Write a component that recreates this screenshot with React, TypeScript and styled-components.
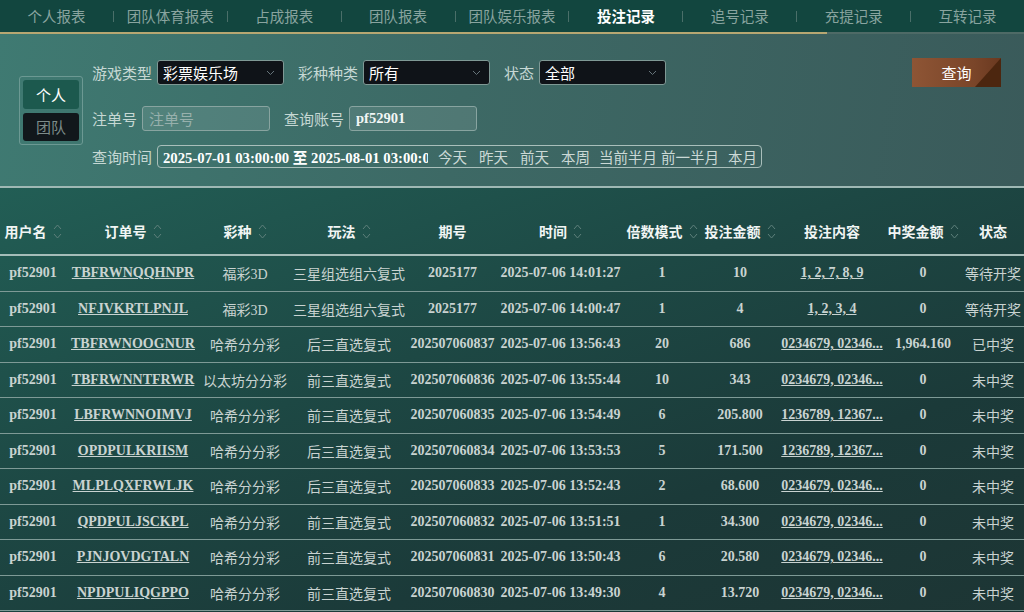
import React from 'react';
import styled, { createGlobalStyle } from 'styled-components';

const GlobalStyle = createGlobalStyle`
  html, body {
    margin: 0;
    padding: 0;
    background: #1c3a38;
    overflow: hidden;
  }
  body {
    font-family: "Noto Sans CJK SC", "Noto Sans", sans-serif;
  }
  * {
    box-sizing: border-box;
  }
`;

const SERIF = `"Liberation Serif", "Noto Sans CJK SC", serif`;

const COLS = '66px 134px 90px 118px 89px 127px 76px 80px 104px 78px 62px';

const tabs = [
  '个人报表',
  '团队体育报表',
  '占成报表',
  '团队报表',
  '团队娱乐报表',
  '投注记录',
  '追号记录',
  '充提记录',
  '互转记录',
];

const headers: { label: string; sort: boolean }[] = [
  { label: '用户名', sort: true },
  { label: '订单号', sort: true },
  { label: '彩种', sort: true },
  { label: '玩法', sort: true },
  { label: '期号', sort: false },
  { label: '时间', sort: true },
  { label: '倍数模式', sort: true },
  { label: '投注金额', sort: true },
  { label: '投注内容', sort: false },
  { label: '中奖金额', sort: true },
  { label: '状态', sort: false },
];

const rows = [
  ['TBFRWNQQHNPR', '福彩3D', '三星组选组六复式', '2025177', '2025-07-06 14:01:27', '1', '10', '1, 2, 7, 8, 9', '0', '等待开奖'],
  ['NFJVKRTLPNJL', '福彩3D', '三星组选组六复式', '2025177', '2025-07-06 14:00:47', '1', '4', '1, 2, 3, 4', '0', '等待开奖'],
  ['TBFRWNOOGNUR', '哈希分分彩', '后三直选复式', '202507060837', '2025-07-06 13:56:43', '20', '686', '0234679, 02346...', '1,964.160', '已中奖'],
  ['TBFRWNNTFRWR', '以太坊分分彩', '前三直选复式', '202507060836', '2025-07-06 13:55:44', '10', '343', '0234679, 02346...', '0', '未中奖'],
  ['LBFRWNNOIMVJ', '哈希分分彩', '前三直选复式', '202507060835', '2025-07-06 13:54:49', '6', '205.800', '1236789, 12367...', '0', '未中奖'],
  ['OPDPULKRIISM', '哈希分分彩', '后三直选复式', '202507060834', '2025-07-06 13:53:53', '5', '171.500', '1236789, 12367...', '0', '未中奖'],
  ['MLPLQXFRWLJK', '哈希分分彩', '后三直选复式', '202507060833', '2025-07-06 13:52:43', '2', '68.600', '0234679, 02346...', '0', '未中奖'],
  ['QPDPULJSCKPL', '哈希分分彩', '前三直选复式', '202507060832', '2025-07-06 13:51:51', '1', '34.300', '0234679, 02346...', '0', '未中奖'],
  ['PJNJOVDGTALN', '哈希分分彩', '前三直选复式', '202507060831', '2025-07-06 13:50:43', '6', '20.580', '0234679, 02346...', '0', '未中奖'],
  ['NPDPULIQGPPO', '哈希分分彩', '前三直选复式', '202507060830', '2025-07-06 13:49:30', '4', '13.720', '0234679, 02346...', '0', '未中奖'],
];

// quick range links, with the space in front of each one
const quickLinks: [string, number][] = [
  ['今天', 10],
  ['昨天', 12],
  ['前天', 12],
  ['本周', 12],
  ['当前半月', 9],
  ['前一半月', 4],
  ['本月', 9],
];

const SortIcon = () => (
  <svg width="9" height="17" viewBox="0 0 9 17" fill="none">
    <path d="M1 6 L4.5 2 L8 6" stroke="#5e807b" strokeWidth="1" />
    <path d="M1 11 L4.5 15 L8 11" stroke="#5e807b" strokeWidth="1" />
  </svg>
);

const Chevron = () => (
  <svg width="9" height="6" viewBox="0 0 9 6" fill="none">
    <path d="M1 1 L4.5 4.5 L8 1" stroke="#66747a" strokeWidth="1" />
  </svg>
);

const App = () => {
  return (
    <Page>
      <GlobalStyle />
      <TabBar>
        {tabs.map((t, i) => (
          <React.Fragment key={t}>
            {i > 0 && <TabSep />}
            <Tab className={t === '投注记录' ? 'active' : ''}>{t}</Tab>
          </React.Fragment>
        ))}
      </TabBar>

      <FilterPanel>
        <ScopeToggle>
          <ScopeButton $active>个人</ScopeButton>
          <ScopeButton>团队</ScopeButton>
        </ScopeToggle>

        <Fields>
          <FieldRow>
            <Field>
              <Label>游戏类型</Label>
              <Select>
                <span>彩票娱乐场</span>
                <Chevron />
              </Select>
            </Field>
            <Field>
              <Label>彩种种类</Label>
              <Select>
                <span>所有</span>
                <Chevron />
              </Select>
            </Field>
            <Field>
              <Label>状态</Label>
              <Select>
                <span>全部</span>
                <Chevron />
              </Select>
            </Field>
            <QueryButton>查询</QueryButton>
          </FieldRow>

          <FieldRow $mt={19}>
            <Field>
              <Label>注单号</Label>
              <TextInput placeholder="注单号" />
            </Field>
            <Field>
              <Label>查询账号</Label>
              <TextInput defaultValue="pf52901" $bold />
            </Field>
          </FieldRow>

          <FieldRow $mt={14}>
            <Field>
              <Label>查询时间</Label>
              <DateBox>
                <DateText>2025-07-01 03:00:00 至 2025-08-01 03:00:00</DateText>
                {quickLinks.map(([q, gap]) => (
                  <QuickLink key={q} $gap={gap}>
                    {q}
                  </QuickLink>
                ))}
              </DateBox>
            </Field>
          </FieldRow>
        </Fields>
      </FilterPanel>

      <TableArea>
        <HeadRow>
          {headers.map((h) => (
            <HeadCell key={h.label}>
              <span>{h.label}</span>
              {h.sort && <SortIcon />}
            </HeadCell>
          ))}
        </HeadRow>
        {rows.map((r) => (
          <Row key={r[0]}>
            <Cell>pf52901</Cell>
            <Cell $link>{r[0]}</Cell>
            <Cell $cjk>{r[1]}</Cell>
            <Cell $cjk>{r[2]}</Cell>
            <Cell>{r[3]}</Cell>
            <Cell>{r[4]}</Cell>
            <Cell>{r[5]}</Cell>
            <Cell>{r[6]}</Cell>
            <Cell $link>{r[7]}</Cell>
            <Cell>{r[8]}</Cell>
            <Cell $cjk>{r[9]}</Cell>
          </Row>
        ))}
      </TableArea>
    </Page>
  );
};

export default App;

const Page = styled.div`
  width: 1024px;
  height: 612px;
  overflow: hidden;
  display: flex;
  flex-direction: column;
`;

const TabBar = styled.div`
  height: 34px;
  flex-shrink: 0;
  display: flex;
  align-items: center;
  background: #12463f;
  border-bottom: 2px solid transparent;
  border-image: linear-gradient(
      to right,
      #b7a772 0,
      #b7a772 826px,
      #4e6a66 826px,
      #4e6a66 100%
    )
    1;
`;

const Tab = styled.div`
  flex: 1;
  text-align: center;
  font-size: 14.5px;
  color: #89a49f;
  line-height: 32px;
  &.active {
    color: #ffffff;
    font-weight: 600;
  }
`;

const TabSep = styled.div`
  width: 1px;
  height: 11px;
  background: #4a6f69;
`;

const FilterPanel = styled.div`
  height: 154px;
  flex-shrink: 0;
  display: flex;
  padding: 24px 23px 0 19px;
  background: linear-gradient(100deg, #3f7a72 0%, #3d6965 45%, #3a5a5a 100%);
  border-bottom: 2px solid #9fb8b4;
`;

const ScopeToggle = styled.div`
  align-self: flex-start;
  margin-top: 18px;
  width: 64px;
  height: 69px;
  padding: 3px;
  border: 1px solid #6c9993;
  border-radius: 3px;
  display: flex;
  flex-direction: column;
  gap: 4px;
`;

const ScopeButton = styled.div<{ $active?: boolean }>`
  flex: 1;
  display: flex;
  align-items: center;
  justify-content: center;
  border-radius: 3px;
  font-size: 15px;
  background: ${({ $active }) => ($active ? '#1c594e' : '#11171b')};
  color: ${({ $active }) => ($active ? '#ffffff' : '#7d8c8a')};
`;

const Fields = styled.div`
  flex: 1;
  margin-left: 9px;
  display: flex;
  flex-direction: column;
`;

const FieldRow = styled.div<{ $mt?: number }>`
  display: flex;
  align-items: center;
  margin-top: ${({ $mt }) => $mt || 0}px;
`;

const Field = styled.div`
  display: flex;
  align-items: center;
  margin-right: 14px;
`;

const Label = styled.span`
  font-size: 15px;
  color: #c6d8d4;
  margin-right: 5px;
  white-space: nowrap;
`;

const Select = styled.div`
  width: 127px;
  height: 25px;
  padding: 0 8px 0 5px;
  display: flex;
  align-items: center;
  justify-content: space-between;
  background: #0f1318;
  border: 1px solid #7f9995;
  border-radius: 3px;
  color: #ffffff;
  font-size: 15px;
`;

const TextInput = styled.input<{ $bold?: boolean }>`
  width: 128px;
  height: 25px;
  padding: 0 6px;
  background: rgba(255, 255, 255, 0.1);
  border: 1px solid #88a4a0;
  border-radius: 3px;
  outline: none;
  color: #f2f6f5;
  font-family: ${({ $bold }) => ($bold ? SERIF : `"Noto Sans CJK SC", sans-serif`)};
  font-weight: ${({ $bold }) => ($bold ? 700 : 400)};
  font-size: ${({ $bold }) => ($bold ? '14.5px' : '15px')};
  &::placeholder {
    color: #97b0ac;
  }
`;

const QueryButton = styled.div`
  position: relative;
  margin-left: auto;
  width: 89px;
  height: 29px;
  display: flex;
  align-items: center;
  justify-content: center;
  color: #ffffff;
  font-size: 15px;
  background: linear-gradient(to right, #8e5535, #7a4529 70%, #6a3920);
  overflow: hidden;
  &::after {
    content: '';
    position: absolute;
    right: 0;
    top: 0;
    width: 26px;
    height: 29px;
    background: #4c260f;
    clip-path: polygon(100% 0, 100% 100%, 0 100%);
  }
`;

const DateBox = styled.div`
  width: 605px;
  height: 23px;
  padding-left: 5px;
  display: flex;
  align-items: center;
  border: 1px solid #a9bfbb;
  border-radius: 4px;
  overflow: hidden;
`;

const DateText = styled.span`
  flex-shrink: 0;
  width: 265px;
  overflow: hidden;
  white-space: nowrap;
  font-family: ${SERIF};
  font-weight: 700;
  font-size: 14.7px;
  color: #ffffff;
`;

const QuickLink = styled.span<{ $gap: number }>`
  flex-shrink: 0;
  margin-left: ${({ $gap }) => $gap}px;
  font-size: 14.5px;
  color: #cbd9d6;
  white-space: nowrap;
`;

const TableArea = styled.div`
  flex: 1;
  padding-top: 20px;
  background: linear-gradient(160deg, #225e55 0%, #1d4844 40%, #1b3a39 70%, #1d3534 100%);
`;

const HeadRow = styled.div`
  display: grid;
  grid-template-columns: ${COLS};
  height: 48px;
  border-bottom: 2px solid #a5bdb9;
`;

const HeadCell = styled.div`
  display: flex;
  align-items: center;
  justify-content: center;
  gap: 6px;
  font-size: 14px;
  font-weight: 600;
  color: #f1f5f4;
  white-space: nowrap;
`;

const Row = styled.div`
  display: grid;
  grid-template-columns: ${COLS};
  height: 35.5px;
  border-bottom: 1px solid #7e9a96;
`;

const Cell = styled.div<{ $link?: boolean; $cjk?: boolean }>`
  display: flex;
  align-items: center;
  justify-content: center;
  white-space: nowrap;
  font-family: ${SERIF};
  font-size: 14px;
  font-weight: ${({ $cjk }) => ($cjk ? 400 : 700)};
  color: #c9d3d1;
  text-decoration: ${({ $link }) => ($link ? 'underline' : 'none')};
`;
